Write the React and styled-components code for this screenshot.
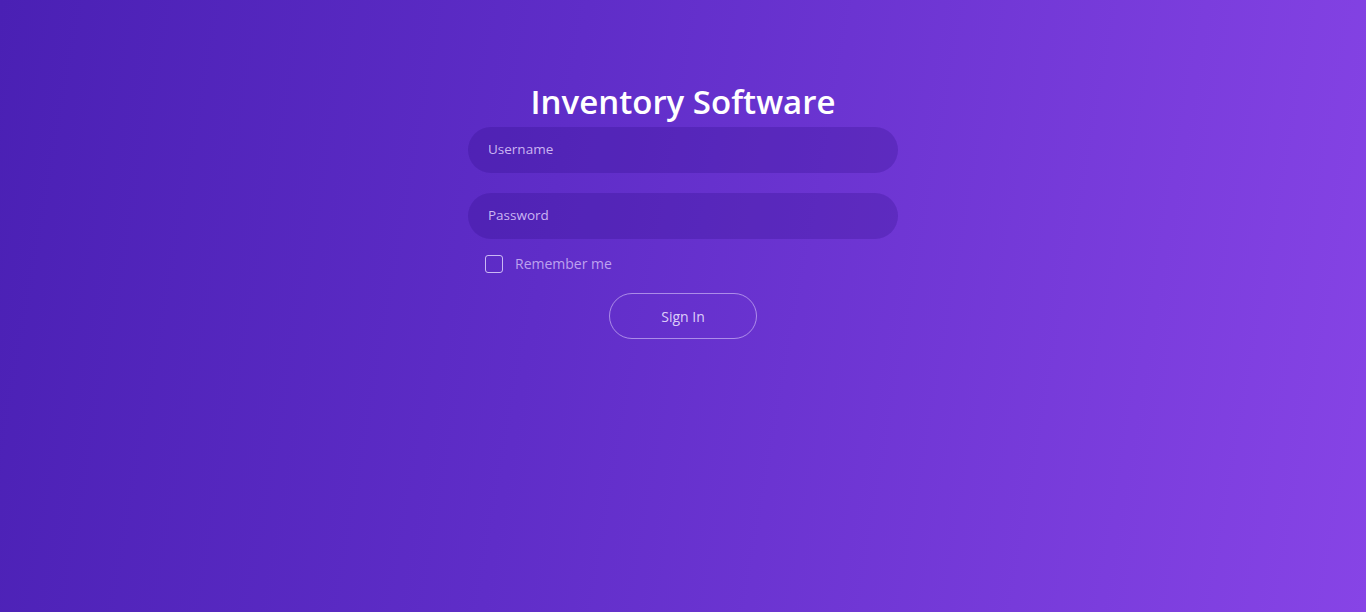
import React from 'react'
import styled, { createGlobalStyle } from 'styled-components'

const GlobalStyle = createGlobalStyle`
html, body {
  margin: 0;
  padding: 0;
  height: 100%;
}
body {
  font-family: "Open Sans", "Noto Sans", sans-serif;
}
#root {
  height: 100%;
}
* { box-sizing: border-box; }
`

const Page = styled.div`
min-height: 100vh;
background: linear-gradient(100deg, #4a20b4 0%, #5f2dc8 40%, #8744e6 100%);
display: flex;
justify-content: center;
padding-top: 80px;
`

const Form = styled.form`
width: 430px;
display: flex;
flex-direction: column;
align-items: center;
`

const Title = styled.h1`
margin: 0 0 4px;
font-size: 33px;
line-height: 43px;
font-weight: 600;
color: #fff;
letter-spacing: 0;
`

const Input = styled.input`
width: 100%;
height: 46px;
border: none;
border-radius: 23px;
background: rgba(40, 10, 130, 0.24);
padding: 0 20px 2px;
margin-bottom: ${p => p.$gap || 0}px;
font-family: inherit;
font-size: 13.5px;
font-weight: 500;
color: #fff;
outline: none;

&::placeholder {
  color: rgba(225, 210, 255, 0.85);
}
`

const CheckRow = styled.label`
align-self: flex-start;
display: flex;
align-items: center;
gap: 12px;
margin: 15px 0 20px 17px;
font-size: 14px;
font-weight: 400;
color: rgba(225, 210, 255, 0.72);
cursor: pointer;
`

const Box = styled.span`
width: 18px;
height: 18px;
border: 1px solid rgba(230, 220, 255, 0.8);
border-radius: 3px;
`

const Button = styled.button`
width: 148px;
height: 46px;
border: 1px solid rgba(230, 215, 255, 0.55);
border-radius: 23px;
background: transparent;
font-family: inherit;
font-size: 14px;
font-weight: 500;
color: rgba(235, 225, 255, 0.9);
cursor: pointer;
`

const App = () => {
  return (
    <>
      <GlobalStyle />
      <Page>
        <Form onSubmit={e => e.preventDefault()}>
          <Title>Inventory Software</Title>
          <Input placeholder="Username" $gap={20} />
          <Input type="password" placeholder="Password" />
          <CheckRow>
            <Box />
            Remember me
          </CheckRow>
          <Button type="submit">Sign In</Button>
        </Form>
      </Page>
    </>
  )
}

export default App
